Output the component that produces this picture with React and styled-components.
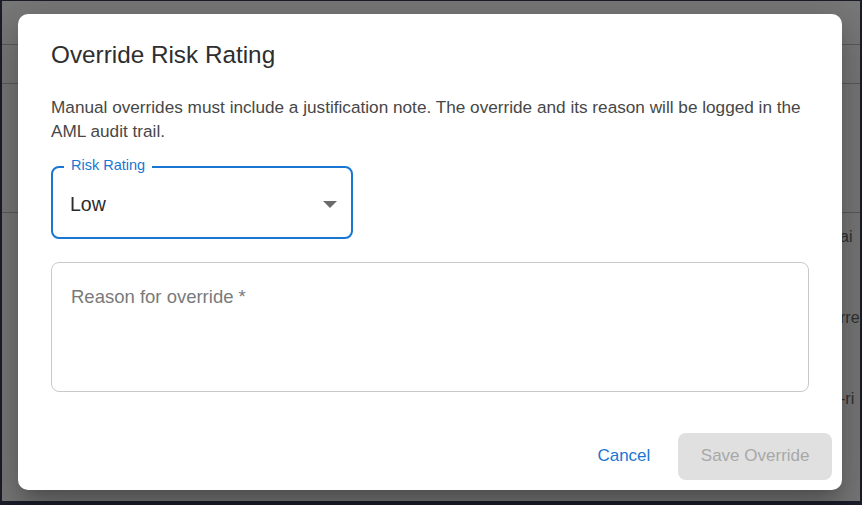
import React from "react";
import styled, { createGlobalStyle } from "styled-components";

const GlobalStyle = createGlobalStyle`
  html, body { margin: 0; padding: 0; background: #1b1d2b; }
  * { box-sizing: border-box; }
  body { font-family: "Liberation Sans", Arial, sans-serif; }
`;

const Frame = styled.div`
  position: relative;
  width: 862px;
  height: 505px;
  padding: 1px 2px 4px 2px;
  background: #1b1d2b;
  overflow: hidden;
`;

const Page = styled.div`
  position: relative;
  height: 100%;
  background: #ffffff;
  overflow: hidden;
  display: flex;
  flex-direction: column;
`;

const TableRow = styled.div`
  height: ${(p) => p.$h}px;
  flex: 0 0 auto;
  border-bottom: 1px solid #c0c0c0;
`;

const List = styled.div`
  display: flex;
  flex-direction: column;
  gap: 61px;
  padding-top: 14px;
`;

const ListItem = styled.div`
  display: grid;
  grid-template-columns: 838px auto;
  height: 20px;
  line-height: 20px;
  font-size: 16px;
  color: #6a6a6a;
  white-space: nowrap;
`;

const Cell = styled.span`
  grid-column: 2;
`;

const Backdrop = styled.div`
  position: absolute;
  inset: 0;
  background: rgba(0, 0, 0, 0.53);
`;

const Dialog = styled.div`
  position: absolute;
  left: 18px;
  top: 14px;
  width: 824px;
  height: 476px;
  background: #ffffff;
  border-radius: 10px;
  box-shadow: 0 11px 15px -7px rgba(0, 0, 0, 0.2), 0 24px 38px 3px rgba(0, 0, 0, 0.14),
    0 9px 46px 8px rgba(0, 0, 0, 0.12);
  display: flex;
  flex-direction: column;
`;

const Content = styled.div`
  padding: 25px 33px 0 33px;
  display: flex;
  flex-direction: column;
`;

const Title = styled.h2`
  margin: 0;
  font-size: 24.3px;
  line-height: 32px;
  font-weight: 400;
  color: #2e2e2e;
`;

const Description = styled.p`
  margin: 24px 0 0 0;
  font-size: 17.2px;
  line-height: 24px;
  color: #474747;
  max-width: 758px;
`;

const SelectBox = styled.div`
  position: relative;
  margin-top: 23px;
  width: 302px;
  height: 73px;
  border: 2px solid #1976d2;
  border-radius: 8px;
  display: flex;
  align-items: center;
  justify-content: space-between;
  padding: 3px 14px 0 17px;
  cursor: pointer;
`;

const FloatLabel = styled.span`
  position: absolute;
  top: -11px;
  left: 11px;
  padding: 0 7px;
  background: #ffffff;
  font-size: 14.5px;
  line-height: 16px;
  color: #1976d2;
`;

const SelectValue = styled.span`
  font-size: 19.5px;
  color: #2b2b2b;
`;

const Arrow = styled.svg`
  width: 14px;
  height: 7px;
  display: block;
  margin-top: 1px;
`;

const TextArea = styled.textarea`
  margin-top: 23px;
  width: 758px;
  height: 130px;
  border: 1px solid #c9c9c9;
  border-radius: 8px;
  padding: 22px 18px 0 19px;
  font-family: "Liberation Sans", Arial, sans-serif;
  font-size: 18.5px;
  line-height: 24px;
  color: #2b2b2b;
  resize: none;
  outline: none;
  background: #ffffff;
  &::placeholder {
    color: #7a7a7a;
    opacity: 1;
  }
`;

const Actions = styled.div`
  margin-top: auto;
  padding: 10px;
  display: flex;
  justify-content: flex-end;
  align-items: center;
  gap: 16px;
`;

const Button = styled.button`
  font-family: "Liberation Sans", Arial, sans-serif;
  font-size: 17px;
  height: 47px;
  border: none;
  border-radius: 8px;
  padding: 0 ${(p) => (p.$variant === "contained" ? "22.5px" : "12px")} 2px;
  background: ${(p) => (p.$variant === "contained" ? "#e0e0e0" : "transparent")};
  color: ${(p) => (p.$disabled ? "#a8a8a8" : "#1976d2")};
  cursor: ${(p) => (p.$disabled ? "default" : "pointer")};
`;

export default function App() {
  return (
    <>
      <GlobalStyle />
      <Frame>
        <Page>
          <TableRow $h={44} />
          <TableRow $h={39} />
          <TableRow $h={129} />
          <List>
            <ListItem>
              <Cell>ai</Cell>
            </ListItem>
            <ListItem>
              <Cell>rre</Cell>
            </ListItem>
            <ListItem>
              <Cell>-ri</Cell>
            </ListItem>
          </List>
          <Backdrop />
        </Page>
        <Dialog role="dialog" aria-labelledby="dlg-title">
          <Content>
            <Title id="dlg-title">Override Risk Rating</Title>
            <Description>
              Manual overrides must include a justification note. The override and its reason will be
              logged in the AML audit trail.
            </Description>
            <SelectBox>
              <FloatLabel>Risk Rating</FloatLabel>
              <SelectValue>Low</SelectValue>
              <Arrow viewBox="0 0 14 7">
                <polygon points="0,0 14,0 7,7" fill="#6b6b6b" />
              </Arrow>
            </SelectBox>
            <TextArea placeholder="Reason for override *" />
          </Content>
          <Actions>
            <Button>Cancel</Button>
            <Button $variant="contained" $disabled disabled>
              Save Override
            </Button>
          </Actions>
        </Dialog>
      </Frame>
    </>
  );
}
